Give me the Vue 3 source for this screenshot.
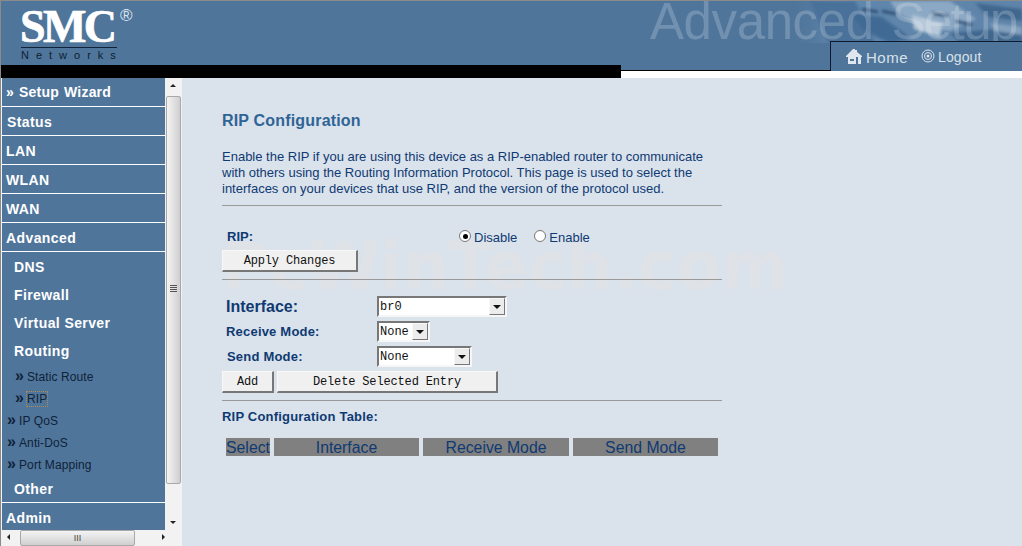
<script setup>
const navTop = [
  { label: '» Setup Wizard', cls: 'first' },
  { label: 'Status', cls: 'status' },
  { label: 'LAN' },
  { label: 'WLAN' },
  { label: 'WAN' },
  { label: 'Advanced' }
]
</script>

<template>
  <div class="page">
    <header class="head">
      <div class="logo">
        <div class="smc">SMC<span class="reg">®</span></div>
        <div class="networks">Networks</div>
      </div>
      <div class="banner">
        <svg class="photo" width="372" height="42" viewBox="0 0 372 42">
          <defs>
            <linearGradient id="fade" x1="0" x2="1" y1="0" y2="0">
              <stop offset="0" stop-color="#4f759b" stop-opacity="0" />
              <stop offset="0.18" stop-color="#5f86ac" stop-opacity="1" />
              <stop offset="1" stop-color="#5f84a9" stop-opacity="1" />
            </linearGradient>
            <filter id="soft" x="-10%" y="-10%" width="120%" height="120%">
              <feGaussianBlur stdDeviation="1.6" />
            </filter>
          </defs>
          <rect x="140" y="0" width="232" height="42" fill="url(#fade)" />
          <g filter="url(#soft)">
            <path d="M160 0 L205 0 L225 42 L178 42Z" fill="#4a7199" />
            <path d="M200 12 L232 16 L262 38 L240 42 L214 30Z" fill="#3f6a94" />
            <path d="M240 0 L300 0 L326 18 L300 30 L270 26 L248 12Z" fill="#8ba8c4" />
            <path d="M262 14 L292 22 L290 36 L264 28Z" fill="#b7c9da" />
            <path d="M300 32 L372 26 L372 42 L310 42Z" fill="#3f678f" />
            <path d="M325 2 L372 8 L372 20 L338 16Z" fill="#3f678f" />
            <path d="M340 22 L372 26 L372 34 L345 30Z" fill="#84a2bf" />
          </g>
          <path d="M212 8 L228 11 M232 10 L246 13 M282 12 L298 15 M305 20 L322 24" stroke="#27496d" stroke-width="2.5" fill="none" filter="url(#soft)" />
        </svg>
        <div class="adv">Advanced <span class="setup">Setup</span></div>
      </div>
      <div class="tabs">
        <span class="tab home">
          <svg width="17" height="15" viewBox="0 0 17 15">
            <path d="M0 7 L7 0 L9 0 L9 1 L11 1 L11 3 L16 7 L16 8 L0 8Z" fill="#dfe6ee" />
            <path d="M2 8 H10 V15 H2Z M4 10 V12 H8 V10Z" fill="#dfe6ee" fill-rule="evenodd" />
            <path d="M12 8 H15 V15 H12Z" fill="#dfe6ee" />
          </svg>
          Home
        </span>
        <span class="tab logout">
          <svg width="14" height="14" viewBox="0 0 14 14" fill="none" stroke="#dfe6ee">
            <circle cx="7" cy="7" r="6" />
            <circle cx="7" cy="7" r="3.5" />
            <circle cx="7" cy="7" r="1.5" fill="#dfe6ee" stroke="none" />
          </svg>
          Logout
        </span>
      </div>
      <div class="stripe"></div>
      <div class="rule"></div>
    </header>

    <div class="body">
      <aside class="sidewrap">
        <div class="sidemain">
          <nav class="side">
            <div v-for="n in navTop" :key="n.label" class="top" :class="n.cls">{{ n.label }}</div>
            <div class="sub">DNS</div>
            <div class="sub">Firewall</div>
            <div class="sub">Virtual Server</div>
            <div class="sub">Routing</div>
            <div class="leaf in"><i>»</i>Static Route</div>
            <div class="leaf in"><i>»</i><span class="focus">RIP</span></div>
            <div class="leaf"><i>»</i>IP QoS</div>
            <div class="leaf"><i>»</i>Anti-DoS</div>
            <div class="leaf"><i>»</i>Port Mapping</div>
            <div class="sub other">Other</div>
            <div class="top admin">Admin</div>
          </nav>
          <div class="vbar">
            <div class="arrow up"></div>
            <div class="thumb"><span class="grip"></span></div>
            <div class="arrow down"></div>
          </div>
        </div>
        <div class="hbar">
          <div class="arrow left"></div>
          <div class="hthumb"><span>III</span></div>
          <div class="arrow right"></div>
        </div>
      </aside>

      <main class="content">
        <div class="mark">PcWinTech.com</div>
        <h1>RIP Configuration</h1>
        <p class="intro">
          Enable the RIP if you are using this device as a RIP-enabled router to communicate
          with others using the Routing Information Protocol. This page is used to select the
          interfaces on your devices that use RIP, and the version of the protocol used.
        </p>
        <hr class="first-hr" />
        <div class="riprow">
          <b class="riplabel">RIP:</b>
          <span class="radio on"></span><span class="rlabel">Disable</span>
          <span class="radio"></span><span class="rlabel">Enable</span>
        </div>
        <button class="btn apply">Apply Changes</button>
        <hr class="second-hr" />
        <div class="frow big">
          <b class="flabel">Interface:</b>
          <div class="sel w130"><span>br0</span><i class="drop"></i></div>
        </div>
        <div class="frow">
          <b class="flabel">Receive Mode:</b>
          <div class="sel w52"><span>None</span><i class="drop"></i></div>
        </div>
        <div class="frow">
          <b class="flabel send">Send Mode:</b>
          <div class="sel w94"><span>None</span><i class="drop"></i></div>
        </div>
        <div class="btns">
          <button class="btn add">Add</button>
          <button class="btn del">Delete Selected Entry</button>
        </div>
        <hr class="third-hr" />
        <b class="tabletitle">RIP Configuration Table:</b>
        <div class="grid">
          <div>Select</div>
          <div>Interface</div>
          <div>Receive Mode</div>
          <div>Send Mode</div>
        </div>
      </main>
    </div>
  </div>
</template>

<style>
html, body { margin: 0; overflow: hidden; background: #dae2ec; }
</style>

<style scoped>
.page {
  width: 1022px;
  height: 546px;
  overflow: hidden;
  display: flex;
  flex-direction: column;
  font-family: "Liberation Sans", Arial, sans-serif;
  color: #0f3a72;
}
.head {
  position: relative;
  height: 78px;
  flex: none;
  box-sizing: border-box;
  background: #4f759b;
  border-top: 1px solid #8a8a8a;
  border-left: 1px solid #8a8a8a;
  overflow: hidden;
}
.logo { position: absolute; left: 19px; top: 5px; width: 100px; }
.smc {
  font: bold 46px/42px "Liberation Serif", serif;
  color: #fff;
  -webkit-text-stroke: .7px #fff;
  letter-spacing: -2.6px;
  height: 41px;
  position: relative;
  white-space: nowrap;
}
.reg {
  position: absolute;
  left: 100px;
  top: 1px;
  font: 17px/17px "Liberation Sans", sans-serif;
  -webkit-text-stroke: 0;
  letter-spacing: 0;
  color: #dde5ee;
}
.networks {
  border-top: 1px solid #10233a;
  font: 11px/15px "Liberation Sans", sans-serif;
  letter-spacing: 7px;
  color: #0e1e30;
  margin-left: 1px;
  white-space: nowrap;
  width: 96px;
}
.banner { position: absolute; left: 649px; top: 0; width: 372px; height: 42px; }
.photo { position: absolute; left: 0; top: 0; }
.adv {
  position: absolute;
  left: 0;
  top: 0;
  font-size: 51px;
  letter-spacing: -.4px;
  word-spacing: 4px;
  line-height: 41px;
  white-space: nowrap;
  color: rgba(255, 255, 255, .2);
}
.setup { letter-spacing: -1.6px; }
.tabs {
  position: absolute;
  left: 829px;
  top: 40px;
  right: 0;
  height: 30px;
  box-sizing: border-box;
  background: #4f759b;
  border-top: 1px solid #0b1a2c;
  border-left: 1px solid #0b1a2c;
  display: flex;
  align-items: center;
  padding: 1px 0 0 15px;
  gap: 13px;
  font-size: 15px;
  letter-spacing: .5px;
  color: #d8e1ea;
}
.tab { display: flex; align-items: center; gap: 3px; }
.tab svg { position: relative; top: -1px; }
.logout { font-size: 14px; letter-spacing: .1px; gap: 3px; }
.stripe { position: absolute; left: 0; top: 64px; width: 620px; height: 13px; background: #000; }
.rule { position: absolute; left: 620px; top: 69px; width: 210px; height: 1px; background: #000; }
.head::after {
  content: "";
  position: absolute;
  left: 620px;
  right: 0;
  top: 70px;
  height: 7px;
  background: #fff;
}
.body { flex: 1; display: flex; min-height: 0; }
.sidewrap {
  width: 182px;
  flex: none;
  display: flex;
  flex-direction: column;
  box-sizing: border-box;
  border-left: 1px solid #8a8a8a;
  padding-left: 1px;
  background: #f2f2f2;
}
.sidemain { flex: 1; display: flex; min-height: 0; }
.side {
  width: 163px;
  background: #4f759b;
  flex: none;
  overflow: hidden;
  color: #fff;
}
.top {
  height: 29px;
  box-sizing: border-box;
  border-bottom: 1px solid #fff;
  font: bold 14px/30px "Liberation Sans", sans-serif;
  letter-spacing: .4px;
  padding-left: 4px;
  white-space: nowrap;
}
.first { padding-left: 4px; line-height: 28px; letter-spacing: .2px; word-spacing: 1px; }
.status { padding-left: 5px; }
.sub {
  height: 28px;
  font: bold 14px/30px "Liberation Sans", sans-serif;
  letter-spacing: .4px;
  padding-left: 12px;
}
.leaf {
  height: 22px;
  font: 12px/26px "Liberation Sans", sans-serif;
  letter-spacing: .1px;
  color: #0f2238;
  padding-left: 5px;
  display: flex;
  white-space: nowrap;
}
.leaf.in { padding-left: 13px; }
.leaf i { font: bold 16px/23px "Liberation Sans", sans-serif; font-style: normal; width: 12px; color: #0f2238; }
.focus { outline: 1px dotted #b08a50; height: 14px; line-height: 14px; margin-top: 6px; }
.other { border-bottom: 1px solid #fff; }
.admin { border-bottom: 0; }
.vbar {
  flex: 1;
  display: flex;
  flex-direction: column;
  background: #f2f2f2;
}
.arrow { flex: none; position: relative; }
.vbar .arrow { height: 18px; }
.vbar .up::after, .vbar .down::after, .hbar .left::after, .hbar .right::after {
  content: "";
  position: absolute;
  width: 0;
  height: 0;
  border: 3.5px solid transparent;
}
.vbar .up::after { left: 5px; top: 3px; border-bottom-color: #222; }
.vbar .down::after { left: 5px; top: 9px; border-top-color: #222; }
.thumb {
  height: 388px;
  box-sizing: border-box;
  border: 1px solid #a8a8a8;
  border-radius: 2px;
  margin: 0 1px;
  background: linear-gradient(90deg, #f4f4f4, #cfcfcf);
  position: relative;
  flex: none;
}
.grip {
  position: absolute;
  left: 3px;
  top: 188px;
  width: 7px;
  height: 7px;
  background: repeating-linear-gradient(180deg, #555 0 1px, transparent 1px 2px);
}
.vbar .down { margin-top: auto; }
.hbar {
  height: 16px;
  flex: none;
  display: flex;
  width: 165px;
  background: #f2f2f2;
}
.hbar .arrow { width: 18px; }
.hbar .left::after { left: 2px; top: 4px; border-right-color: #222; }
.hbar .right::after { left: 9px; top: 4px; border-left-color: #222; }
.hthumb {
  width: 115px;
  box-sizing: border-box;
  border: 1px solid #a8a8a8;
  border-radius: 2px;
  background: linear-gradient(180deg, #f4f4f4, #cfcfcf);
  font: 9px/14px "Liberation Sans", sans-serif;
  text-align: center;
  color: #444;
}
.hbar .right { margin-left: auto; width: 14px; }
.content {
  position: relative;
  flex: 1;
  background: #dae2ec;
  box-sizing: border-box;
  padding: 33px 0 0 40px;
  width: 840px;
  overflow: hidden;
}
h1 {
  margin: 0;
  font: bold 16px/20px "Liberation Sans", sans-serif;
  letter-spacing: .18px;
  color: #2f6496;
}
.intro {
  margin: 18px 0 0;
  width: 500px;
  font-size: 13px;
  line-height: 16px;
  color: #0f3a72;
}
hr { border: 0; height: 1px; background: #9a9a9a; margin: 0; width: 500px; position: relative; z-index: 1; }
.first-hr { margin-top: 8px; }
.riprow { display: flex; align-items: center; height: 16px; margin-top: 23px; font-size: 13px; position: relative; }
.riplabel { width: 237px; padding: 0 0 2px 5px; box-sizing: border-box; font-size: 13px; flex: none; }
.radio {
  width: 12px;
  height: 12px;
  box-sizing: border-box;
  border-radius: 50%;
  background: #fff;
  border: 1px solid #777;
  position: relative;
  margin-top: -2px;
  flex: none;
}
.radio.on::after {
  content: "";
  position: absolute;
  inset: 2.5px;
  border-radius: 50%;
  background: #000;
}
.rlabel { margin-left: 3px; margin-right: 17px; }
.btn {
  position: relative;
  font: 12px/14px "Liberation Mono", monospace;
  letter-spacing: -.15px;
  color: #111;
  background: #f0f0f0;
  border: 1px solid #f8f8f8;
  border-right: 2px solid #777;
  border-bottom: 2px solid #777;
  padding: 0;
  height: 22px;
  display: block;
  box-sizing: border-box;
}
.apply { width: 136px; margin-top: 5px; }
.second-hr { margin-top: 7px; }
.frow { display: flex; align-items: center; height: 25px; position: relative; }
.big { margin-top: 14px; height: 25px; }
.flabel { width: 155px; padding-left: 4px; box-sizing: border-box; font-size: 13px; letter-spacing: .2px; flex: none; }
.send { padding-left: 5px; }
.big .flabel { font-size: 16px; letter-spacing: 0; }
.sel {
  height: 21px;
  box-sizing: border-box;
  background: #fff;
  border: 2px solid;
  border-color: #777 #f6f6f6 #f6f6f6 #777;
  display: flex;
  align-items: center;
  font: 12px/16px "Liberation Mono", monospace;
  color: #111;
  padding-left: 1px;
}
.sel span { flex: 1; }
.w130 { width: 130px; }
.w52 { width: 53px; }
.w94 { width: 95px; }
.drop {
  width: 16px;
  height: 17px;
  box-sizing: border-box;
  background: #ececec;
  border: 1px solid;
  border-color: #f8f8f8 #777 #777 #f8f8f8;
  position: relative;
  flex: none;
}
.drop::after {
  content: "";
  position: absolute;
  left: 3px;
  top: 6px;
  border: 4px solid transparent;
  border-top-color: #111;
}
.btns { display: flex; gap: 3px; margin-top: 2px; }
.add { width: 52px; }
.del { width: 221px; }
.third-hr { margin-top: 7px; }
.tabletitle { display: block; font-size: 13px; line-height: 15px; margin-top: 8px; letter-spacing: .2px; }
.grid {
  display: grid;
  grid-template-columns: 44px 145px 146px 145px;
  gap: 4px;
  margin: 14px 0 0 4px;
  width: 492px;
}
.grid div {
  height: 18px;
  background: #808080;
  font-size: 15.8px;
  line-height: 19px;
  text-align: center;
  white-space: nowrap;
  overflow: hidden;
  color: #0f3a72;
}
.mark {
  position: absolute;
  left: 40px;
  top: 154px;
  font: bold 65px/70px "DejaVu Sans", sans-serif;
  white-space: nowrap;
  color: #dfe2e6;
  pointer-events: none;
}
</style>
